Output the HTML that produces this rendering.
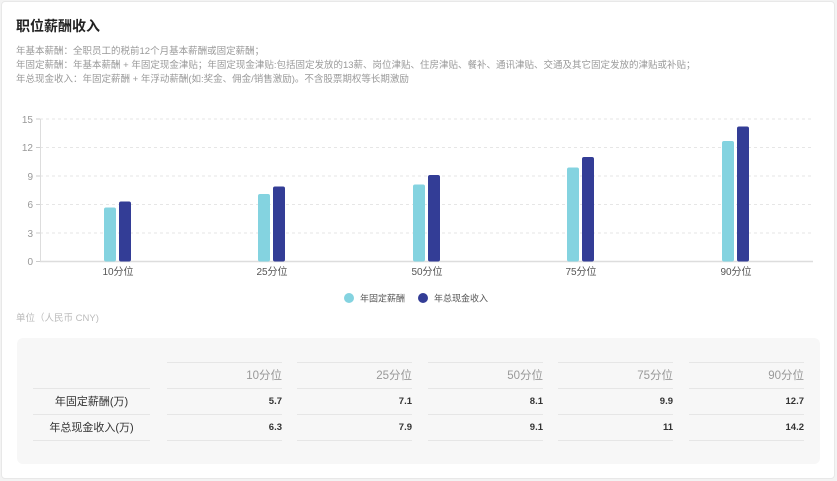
<!DOCTYPE html>
<html><head><meta charset="utf-8"><style>
*{margin:0;padding:0;box-sizing:border-box}
body{width:837px;height:481px;background:#f3f3f3;font-family:"Liberation Sans","Noto Sans CJK SC",sans-serif;position:relative;overflow:hidden}
.card{position:absolute;left:1px;top:1px;width:834px;height:478px;background:#fff;border:1px solid #e8e8e8;border-radius:4px}
.t{position:absolute;left:16px;top:16px;font-size:14px;font-weight:bold;color:#222}
.d{position:absolute;left:16px;top:45px;font-size:9.5px;line-height:14px;color:#999;white-space:nowrap}
.unit{position:absolute;left:16px;top:310px;font-size:9.5px;color:#bbb}
.tb{position:absolute;left:17px;top:338px;width:803px;height:126px;background:#f7f7f7;border-radius:6px}
.c{position:absolute;font-size:11px;color:#333;height:26px;line-height:26px}
.h{color:#999;font-size:11.5px;text-align:right}
.n{text-align:right;font-weight:bold;font-size:9.5px;font-family:"Liberation Sans Narrow","Liberation Sans",sans-serif}
.ln{position:absolute;height:1px;background:#e6e6e6}
</style></head><body>
<div class="card"></div>
<div class="t">职位薪酬收入</div>
<div class="d">年基本薪酬：全职员工的税前12个月基本薪酬或固定薪酬；<br>年固定薪酬：年基本薪酬 + 年固定现金津贴；年固定现金津贴:包括固定发放的13薪、岗位津贴、住房津贴、餐补、通讯津贴、交通及其它固定发放的津贴或补贴；<br>年总现金收入：年固定薪酬 + 年浮动薪酬(如:奖金、佣金/销售激励)。不含股票期权等长期激励</div>
<svg style="position:absolute;left:0;top:0" width="837" height="320" font-family="Liberation Sans,Noto Sans CJK SC,sans-serif">
<g stroke="#e6e6e6" stroke-dasharray="3,3">
<line x1="40" x2="813" y1="119" y2="119"/><line x1="40" x2="813" y1="147.5" y2="147.5"/><line x1="40" x2="813" y1="176" y2="176"/><line x1="40" x2="813" y1="204.5" y2="204.5"/><line x1="40" x2="813" y1="233" y2="233"/>
</g>
<line x1="40" x2="813" y1="261.5" y2="261.5" stroke="#ddd" stroke-width="1.5"/>
<line x1="40.5" x2="40.5" y1="119" y2="262" stroke="#ddd"/>
<g stroke="#ccc"><line x1="36" x2="40" y1="119" y2="119"/><line x1="36" x2="40" y1="147.5" y2="147.5"/><line x1="36" x2="40" y1="176" y2="176"/><line x1="36" x2="40" y1="204.5" y2="204.5"/><line x1="36" x2="40" y1="233" y2="233"/><line x1="36" x2="40" y1="261.5" y2="261.5"/></g>
<g font-size="10" fill="#999" text-anchor="end"><text x="33" y="123">15</text><text x="33" y="151">12</text><text x="33" y="180">9</text><text x="33" y="208">6</text><text x="33" y="237">3</text><text x="33" y="265">0</text></g>
<g fill="#84d3e0">
<rect x="104" y="207.5" width="12" height="54" rx="2"/><rect x="258" y="194" width="12" height="67.5" rx="2"/><rect x="413" y="184.5" width="12" height="77" rx="2"/><rect x="567" y="167.5" width="12" height="94" rx="2"/><rect x="722" y="141" width="12" height="120.5" rx="2"/>
</g>
<g fill="#333d96">
<rect x="119" y="201.5" width="12" height="60" rx="2"/><rect x="273" y="186.5" width="12" height="75" rx="2"/><rect x="428" y="175" width="12" height="86.5" rx="2"/><rect x="582" y="157" width="12" height="104.5" rx="2"/><rect x="737" y="126.5" width="12" height="135" rx="2"/>
</g>
<g font-size="10" fill="#555" text-anchor="middle"><text x="118" y="275">10分位</text><text x="272" y="275">25分位</text><text x="427" y="275">50分位</text><text x="581" y="275">75分位</text><text x="736" y="275">90分位</text></g>
<circle cx="349" cy="298" r="5" fill="#84d3e0"/><text x="360" y="301.5" font-size="9" fill="#555">年固定薪酬</text>
<circle cx="423" cy="298" r="5" fill="#333d96"/><text x="434" y="301.5" font-size="9" fill="#555">年总现金收入</text>
</svg>
<div class="unit">单位（人民币 CNY)</div>
<div class="tb"></div>
<div class="ln" style="left:33px;top:388px;width:117px"></div>
<div class="ln" style="left:33px;top:414px;width:117px"></div>
<div class="ln" style="left:33px;top:440px;width:117px"></div>
<div class="c" style="left:33px;top:389px;width:117px;text-align:center">年固定薪酬(万)</div>
<div class="c" style="left:33px;top:415px;width:117px;text-align:center">年总现金收入(万)</div>
<div id="cols"></div>
<script>
var xs=[167,297,428,558,689],h=["10分位","25分位","50分位","75分位","90分位"],a=["5.7","7.1","8.1","9.9","12.7"],b=["6.3","7.9","9.1","11","14.2"],s="";
for(var i=0;i<5;i++){var x=xs[i];
[362,388,414,440].forEach(function(y){s+='<div class="ln" style="left:'+x+'px;top:'+y+'px;width:115px"></div>'});
s+='<div class="c h" style="left:'+x+'px;top:363px;width:115px">'+h[i]+'</div>';
s+='<div class="c n" style="left:'+x+'px;top:389px;width:115px">'+a[i]+'</div>';
s+='<div class="c n" style="left:'+x+'px;top:415px;width:115px">'+b[i]+'</div>';}
document.getElementById("cols").innerHTML=s;
</script>
</body></html>
